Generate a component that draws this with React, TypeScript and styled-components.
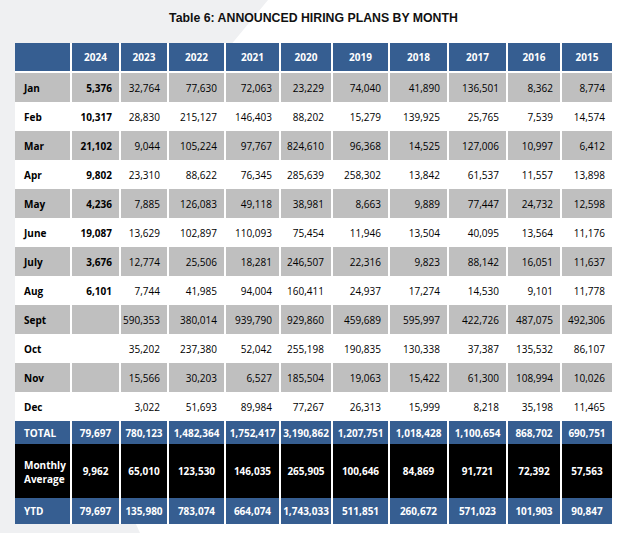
import React from "react";
import styled, { createGlobalStyle } from "styled-components";

const GlobalStyle = createGlobalStyle`
  html, body {
    margin: 0;
    padding: 0;
    background: #eff0f2;
  }
`;

const years = ["2024", "2023", "2022", "2021", "2020", "2019", "2018", "2017", "2016", "2015"];

const months: [string, string[]][] = [
  ["Jan", ["5,376", "32,764", "77,630", "72,063", "23,229", "74,040", "41,890", "136,501", "8,362", "8,774"]],
  ["Feb", ["10,317", "28,830", "215,127", "146,403", "88,202", "15,279", "139,925", "25,765", "7,539", "14,574"]],
  ["Mar", ["21,102", "9,044", "105,224", "97,767", "824,610", "96,368", "14,525", "127,006", "10,997", "6,412"]],
  ["Apr", ["9,802", "23,310", "88,622", "76,345", "285,639", "258,302", "13,842", "61,537", "11,557", "13,898"]],
  ["May", ["4,236", "7,885", "126,083", "49,118", "38,981", "8,663", "9,889", "77,447", "24,732", "12,598"]],
  ["June", ["19,087", "13,629", "102,897", "110,093", "75,454", "11,946", "13,504", "40,095", "13,564", "11,176"]],
  ["July", ["3,676", "12,774", "25,506", "18,281", "246,507", "22,316", "9,823", "88,142", "16,051", "11,637"]],
  ["Aug", ["6,101", "7,744", "41,985", "94,004", "160,411", "24,937", "17,274", "14,530", "9,101", "11,778"]],
  ["Sept", ["", "590,353", "380,014", "939,790", "929,860", "459,689", "595,997", "422,726", "487,075", "492,306"]],
  ["Oct", ["", "35,202", "237,380", "52,042", "255,198", "190,835", "130,338", "37,387", "135,532", "86,107"]],
  ["Nov", ["", "15,566", "30,203", "6,527", "185,504", "19,063", "15,422", "61,300", "108,994", "10,026"]],
  ["Dec", ["", "3,022", "51,693", "89,984", "77,267", "26,313", "15,999", "8,218", "35,198", "11,465"]],
];

const total = ["79,697", "780,123", "1,482,364", "1,752,417", "3,190,862", "1,207,751", "1,018,428", "1,100,654", "868,702", "690,751"];
const average = ["9,962", "65,010", "123,530", "146,035", "265,905", "100,646", "84,869", "91,721", "72,392", "57,563"];
const ytd = ["79,697", "135,980", "783,074", "664,074", "1,743,033", "511,851", "260,672", "571,023", "101,903", "90,847"];

type Tone = "blue" | "gray" | "white" | "black";

const toneBg: Record<Tone, string> = {
  blue: "#365e91",
  gray: "#bfbfbf",
  white: "#ffffff",
  black: "#000000",
};

const Page = styled.div`
  position: relative;
  width: 622px;
  height: 533px;
  overflow: hidden;
  background: #eff0f2;
  font-family: "Open Sans", "Liberation Sans", sans-serif;

  &::before {
    content: "";
    position: absolute;
    inset: 0;
    background: #ffffff;
    clip-path: polygon(268px 0, 622px 0, 622px 533px, 140px 533px, 30px 288px);
  }
`;

const Content = styled.div`
  position: relative;
  display: flex;
  flex-direction: column;
  padding: 10px 10px 0 15px;
`;

const Title = styled.h1`
  margin: 0 0 16px;
  font-family: "Liberation Sans", Arial, sans-serif;
  font-size: 12.3px;
  font-weight: 700;
  line-height: 17px;
  text-align: center;
  color: #111;
`;

const Table = styled.div`
  width: 597px;
  display: flex;
  flex-direction: column;
  background: #ffffff;
`;

const Row = styled.div<{ $h: number; $gap?: number }>`
  display: grid;
  grid-template-columns: 55px 47px 46px 55px 53px 50px 55px 57px 57px 52px 50px;
  column-gap: 2px;
  height: ${(p) => p.$h}px;
  margin-bottom: ${(p) => p.$gap ?? 0}px;
`;

const Cell = styled.div<{ $tone: Tone; $align?: "left" | "right" | "center"; $bold?: boolean }>`
  display: flex;
  align-items: center;
  justify-content: ${(p) =>
    p.$align === "left" ? "flex-start" : p.$align === "right" ? "flex-end" : "center"};
  padding: ${(p) => (p.$align === "left" ? "0 0 0 9px" : p.$align === "right" ? "0 7px 0 0" : "0")};
  background: ${(p) => toneBg[p.$tone]};
  color: ${(p) => (p.$tone === "blue" || p.$tone === "black" ? "#ffffff" : "#000000")};
  font-size: 10px;
  font-weight: ${(p) => (p.$bold ? 700 : 400)};
  line-height: 14px;
  white-space: nowrap;
`;

const TwoLine = styled.span`
  display: flex;
  flex-direction: column;
  line-height: 14px;
  margin-top: 1px;
`;

const SummaryRow = ({ label, values, tone, h }: { label: React.ReactNode; values: string[]; tone: Tone; h: number }) => (
  <Row $h={h}>
    <Cell $tone={tone} $align="left" $bold>
      {label}
    </Cell>
    {values.map((v, i) => (
      <Cell key={i} $tone={tone} $bold>
        {v}
      </Cell>
    ))}
  </Row>
);

export default function App() {
  return (
    <Page>
      <GlobalStyle />
      <Content>
        <Title>Table 6: ANNOUNCED HIRING PLANS BY MONTH</Title>
        <Table>
          <Row $h={28} $gap={2}>
            <Cell $tone="blue" />
            {years.map((y) => (
              <Cell key={y} $tone="blue" $bold>
                {y}
              </Cell>
            ))}
          </Row>
          {months.map(([m, vals], r) => {
            const tone: Tone = r % 2 === 0 ? "gray" : "white";
            return (
              <Row key={m} $h={29}>
                <Cell $tone={tone} $align="left" $bold>
                  {m}
                </Cell>
                {vals.map((v, i) => (
                  <Cell key={i} $tone={tone} $align="right" $bold={i === 0}>
                    {v}
                  </Cell>
                ))}
              </Row>
            );
          })}
          <SummaryRow label="TOTAL" values={total} tone="blue" h={23} />
          <SummaryRow
            label={
              <TwoLine>
                <span>Monthly</span>
                <span>Average</span>
              </TwoLine>
            }
            values={average}
            tone="black"
            h={54}
          />
          <SummaryRow label="YTD" values={ytd} tone="blue" h={26} />
        </Table>
      </Content>
    </Page>
  );
}
